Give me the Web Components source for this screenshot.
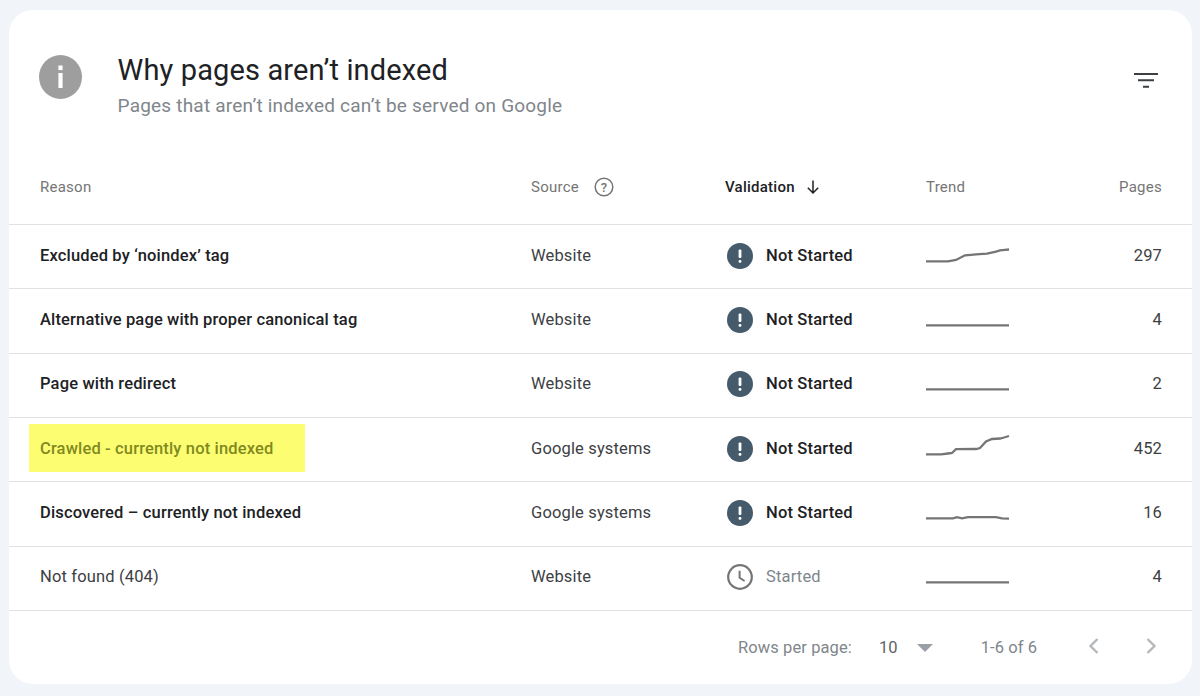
<!DOCTYPE html>
<html lang="en"><head><meta charset="utf-8"><title>Why pages aren't indexed</title>
<style>
html,body{margin:0;height:100%}
body{background:#f1f5fa;font-family:Roboto,"Liberation Sans",sans-serif;padding:10px 8px 12px 9px;box-sizing:border-box;overflow:hidden}
</style></head><body>
<gsc-card>
  <gsc-header slot="header" title-text="Why pages aren’t indexed" subtitle="Pages that aren’t indexed can’t be served on Google"></gsc-header>
  <gsc-head></gsc-head>
  <gsc-row reason="Excluded by ‘noindex’ tag" bold source="Website" status="todo" pages="297" trend="0,16.3 22,16.3 30,15 39,10.3 45,9.8 50,9.3 61,8.7 70,6.7 74,5.3 79,4.8 83,4.5"></gsc-row>
  <gsc-row reason="Alternative page with proper canonical tag" bold source="Website" status="todo" pages="4" trend="0,16.3 83,16.3"></gsc-row>
  <gsc-row reason="Page with redirect" bold source="Website" status="todo" pages="2" trend="0,16.3 83,16.3"></gsc-row>
  <gsc-row reason="Crawled - currently not indexed" highlight source="Google systems" status="todo" pages="452" trend="0,16.3 15,16.3 22,15.5 26,15 30,11.2 50,11 54,10 60,3.5 66,1 74,.5 78,-.5 83,-2"></gsc-row>
  <gsc-row reason="Discovered – currently not indexed" bold source="Google systems" status="todo" pages="16" trend="0,16.3 27,16.3 31,15.2 36,16.3 42,15.2 70,15.2 76,16.3 83,16.6"></gsc-row>
  <gsc-row reason="Not found (404)" source="Website" status="started" pages="4" trend="0,16.3 83,16.3"></gsc-row>
  <gsc-pager></gsc-pager>
</gsc-card>
<script>
const def=(name,html)=>{customElements.define(name,class extends HTMLElement{
  constructor(){super();this.attachShadow({mode:'open'});}
  connectedCallback(){this.shadowRoot.innerHTML=html(this);}
});};
def('gsc-card',()=>`<style>:host{display:flex;flex-direction:column;background:#fff;border-radius:24px;height:674px;overflow:hidden}</style><slot name="header"></slot><slot></slot>`);
def('gsc-info-icon',()=>`<style>:host{display:block;width:43px;height:44px}svg{display:block}</style>
<svg width="43" height="44" viewBox="0 0 43 44"><ellipse cx="21.5" cy="22" rx="21.5" ry="22" fill="#9e9e9e"/><rect x="19.4" y="10.5" width="4.2" height="4.6" fill="#fff"/><rect x="19.4" y="18" width="4.2" height="15" fill="#fff"/></svg>`);
def('gsc-filter-icon',()=>`<style>:host{display:block;width:24px;height:16px}svg{display:block}</style>
<svg width="24" height="16" viewBox="0 0 24 16"><path d="M0 2h24M4 8.2h16M9 14.7h6" stroke="#3c4043" stroke-width="2.1" fill="none"/></svg>`);
def('gsc-header',h=>`<style>
:host{display:flex;align-items:flex-start;height:140px;box-sizing:border-box;padding:45px 34px 0 30px}
.t{flex:1;margin-left:35.6px}
h1{margin:0;font:400 29px/30px Roboto,sans-serif;color:#202124;letter-spacing:.13px}
p{margin:8px 0 0;font:400 19px/26px Roboto,sans-serif;color:#80868b;letter-spacing:.2px}
gsc-filter-icon{margin-top:17px}
</style><gsc-info-icon></gsc-info-icon><div class="t"><h1>${h.getAttribute('title-text')}</h1><p>${h.getAttribute('subtitle')}</p></div><gsc-filter-icon></gsc-filter-icon>`);
const grid=`display:grid;grid-template-columns:491px 194px 201px 83px 1fr;box-sizing:border-box;padding:0 30px 0 31px;align-items:center`;
def('gsc-head',()=>`<style>
:host{${grid};height:75px;border-bottom:1px solid #dfe1e5;font:400 15px/20px Roboto,sans-serif;color:#757575;letter-spacing:.25px}
div{display:flex;align-items:center}
.v{color:#202124;font-weight:500}
.r{justify-content:flex-end}
svg{display:block}
</style><div>Reason</div><div>Source<svg style="margin-left:15px" width="20" height="20" viewBox="0 0 20 20"><circle cx="10" cy="10" r="8.8" fill="none" stroke="#757575" stroke-width="1.5"/><text x="10" y="14.6" text-anchor="middle" font-family="Roboto" font-size="13" font-weight="500" fill="#757575">?</text></svg></div><div class="v">Validation<svg style="margin-left:10.5px" width="16" height="16" viewBox="0 0 16 16"><path d="M8 1.5v12.5M2.8 8.8 8 14l5.2-5.2" fill="none" stroke="#202124" stroke-width="1.5"/></svg></div><div>Trend</div><div class="r">Pages</div>`);
def('gsc-status',h=>{const todo=h.getAttribute('kind')==='todo';return `<style>
:host{display:flex;align-items:center;margin-top:-2px;font:${todo?500:400} 16.5px/24px Roboto,sans-serif;letter-spacing:.17px;color:${todo?'#202124':'#80868b'}}
svg{display:block;margin:0 13px 0 2px}
</style>${todo?`<svg width="26" height="26" viewBox="0 0 26 26"><circle cx="13" cy="13" r="13" fill="#455a6b"/><rect x="11.6" y="6.5" width="2.8" height="8.5" rx="1" fill="#fff"/><rect x="11.6" y="17" width="2.8" height="2.8" rx="1" fill="#fff"/></svg>`:`<svg width="26" height="26" viewBox="0 0 26 26"><circle cx="13" cy="13" r="11.8" fill="none" stroke="#757575" stroke-width="2.2"/><path d="M12.6 6.8v7l5 3.2" fill="none" stroke="#757575" stroke-width="2"/></svg>`}<span>${h.getAttribute('label')}</span>`});
def('gsc-spark',h=>`<style>:host{display:block;width:83px;height:32px}svg{display:block;overflow:visible}</style>
<svg width="83" height="32" viewBox="0 -4 83 32"><polyline points="${h.getAttribute('points')}" fill="none" stroke="#757575" stroke-width="2.3"/></svg>`);
def('gsc-row',h=>{const hl=h.hasAttribute('highlight'),b=h.hasAttribute('bold');const todo=h.getAttribute('status')==='todo';return `<style>
:host{${grid};height:64.33px;border-bottom:1px solid #dfe1e5;font:400 16.5px/24px Roboto,sans-serif;letter-spacing:.15px;color:#3c4043}
.reason{margin-top:-2px;color:#202124;font-weight:${b||hl?500:400}}
.reason.n{color:#3c4043}
.reason.h{margin-top:-4px}
.hl{display:inline-flex;align-items:center;box-sizing:border-box;height:48px;margin-left:-11px;padding:2px 32px 0 11px;background:#fdfd72;color:#7f8a1e}
.src,.p{margin-top:-2px}
.p{text-align:right}
</style><div class="reason ${hl?'h':b?'':'n'}">${hl?`<span class="hl">${h.getAttribute('reason')}</span>`:h.getAttribute('reason')}</div><div class="src">${h.getAttribute('source')}</div><gsc-status kind="${todo?'todo':'started'}" label="${todo?'Not Started':'Started'}"></gsc-status><gsc-spark points="${h.getAttribute('trend')}"></gsc-spark><div class="p">${h.getAttribute('pages')}</div>`});
def('gsc-pager',()=>`<style>
:host{display:flex;align-items:center;flex:1;padding:2px 20px 0 729px;font:400 16.5px/24px Roboto,sans-serif;letter-spacing:.1px;color:#80868b;white-space:nowrap}
.n{margin-left:27px;color:#5f6368}
.c{margin-left:48px}
svg{display:block;flex:none}
.a{margin-left:19px}.l{margin-left:51px}.r{margin-left:47px}
</style><span>Rows per page:</span><span class="n">10</span><svg class="a" width="16" height="8" viewBox="0 0 16 8"><path d="M0 0h16L8 8z" fill="#9aa0a6"/></svg><span class="c">1-6 of 6</span><svg class="l" width="11" height="16" viewBox="0 0 11 16" style="margin-top:-4px"><path d="M9.5 1 2.5 8l7 7" fill="none" stroke="#b4b8bc" stroke-width="2.4"/></svg><svg class="r" width="11" height="16" viewBox="0 0 11 16" style="margin-top:-4px"><path d="M1.5 1l7 7-7 7" fill="none" stroke="#b4b8bc" stroke-width="2.4"/></svg>`);
</script>
</body></html>
